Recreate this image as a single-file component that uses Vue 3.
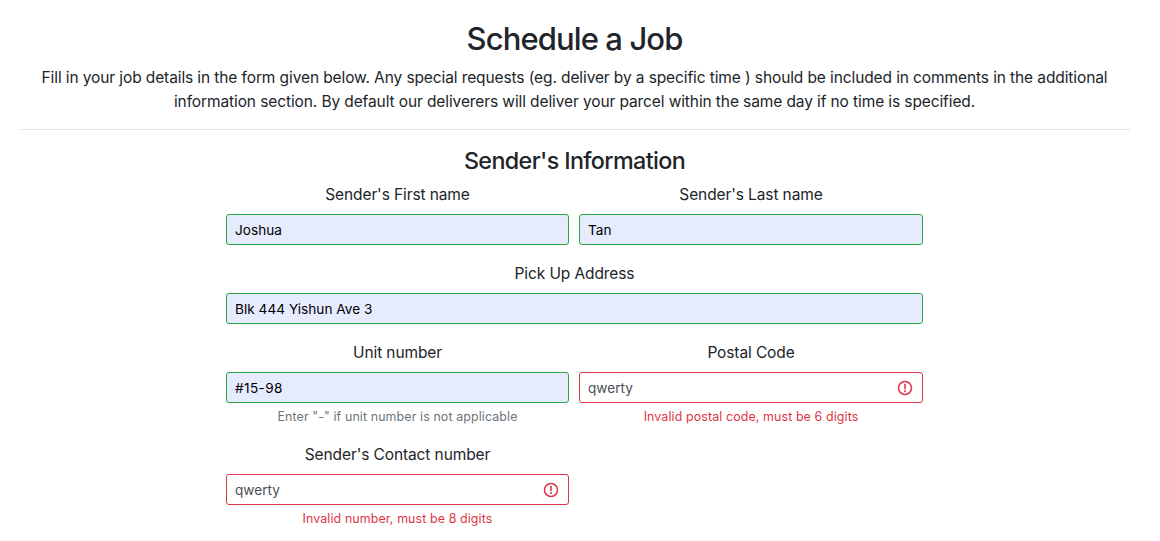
<script setup>
const fields = [
  { id: 'first', label: "Sender's First name", value: 'Joshua', state: 'valid' },
  { id: 'last', label: "Sender's Last name", value: 'Tan', state: 'valid' },
  { id: 'address', label: 'Pick Up Address', value: 'Blk 444 Yishun Ave 3', state: 'valid', wide: true },
  { id: 'unit', label: 'Unit number', value: '#15-98', state: 'valid', note: 'Enter "-" if unit number is not applicable' },
  { id: 'postal', label: 'Postal Code', value: 'qwerty', state: 'invalid', note: 'Invalid postal code, must be 6 digits' },
  { id: 'contact', label: "Sender's Contact number", value: 'qwerty', state: 'invalid', note: 'Invalid number, must be 8 digits' }
]
</script>

<template>
  <main class="page">
    <h1>Schedule a Job</h1>
    <p class="intro">
      Fill in your job details in the form given below. Any special requests (eg. deliver by a specific time ) should be included in comments in the additional<br>
      information section. By default our deliverers will deliver your parcel within the same day if no time is specified.
    </p>
    <hr>
    <h2>Sender's Information</h2>
    <form class="form">
      <div v-for="f in fields" :key="f.id" class="field" :class="[f.state, f.id, { wide: f.wide }]">
        <label>{{ f.label }}</label>
        <div class="control">
          <span class="value">{{ f.value }}</span>
          <svg v-if="f.state === 'invalid'" class="icon" viewBox="0 0 16 16">
            <circle cx="8" cy="8" r="6.5" fill="none" stroke="currentColor" stroke-width="1.5" />
            <path d="M8 4.6v4" stroke="currentColor" stroke-width="1.6" stroke-linecap="round" />
            <circle cx="8" cy="11.1" r="1" fill="currentColor" />
          </svg>
        </div>
        <small v-if="f.note">{{ f.note }}</small>
      </div>
    </form>
  </main>
</template>

<style>
body { margin: 0; background: #fff; }
</style>
<style scoped>
.page {
  box-sizing: border-box;
  height: 541px;
  overflow: hidden;
  padding: 20px 30px 0 20px;
  font: 15.5px/24px Inter, "Liberation Sans", sans-serif;
  letter-spacing: -0.105px;
  color: #212529;
  text-align: center;
}
h1 { margin: 0 0 8px; padding-right: 1px; font-size: 31px; line-height: 38px; font-weight: 500; letter-spacing: -0.9px; }
.intro { margin: 0; padding-right: 1px; white-space: nowrap; }
hr { margin: 15px 0 17px; border: 0; border-top: 1px solid #e5e5e5; }
h2 { margin: 0 0 8px; padding-right: 1px; font-size: 23.3px; line-height: 28px; font-weight: 500; letter-spacing: -0.62px; }
.form { width: 697px; margin: 0 auto 0 206px; display: grid; grid-template-columns: 343px 344px; column-gap: 10px; row-gap: 17px; }
.wide { grid-column: 1 / -1; }
label { display: block; margin-bottom: 7px; }
.control {
  box-sizing: border-box;
  height: 31px;
  display: flex;
  align-items: center;
  justify-content: space-between;
  padding: 0 8px;
  border: 1px solid #28a745;
  border-radius: 3px;
  background: #e6ecfe;
  color: #000;
  font-size: 13.6px;
  line-height: 21px;
  letter-spacing: 0.03px;
}
.value { padding-top: 2px; }
.unit .control { letter-spacing: 0.4px; }
.invalid .control { border-color: #dc3545; background: #fff; color: #495057; }
.icon { width: 16px; height: 16px; margin-right: 1px; color: #dc3545; }
small { display: block; margin-top: 4px; font-size: 12.4px; line-height: 19px; letter-spacing: 0.12px; color: #6c757d; }
.invalid small { color: #dc3545; }
</style>
